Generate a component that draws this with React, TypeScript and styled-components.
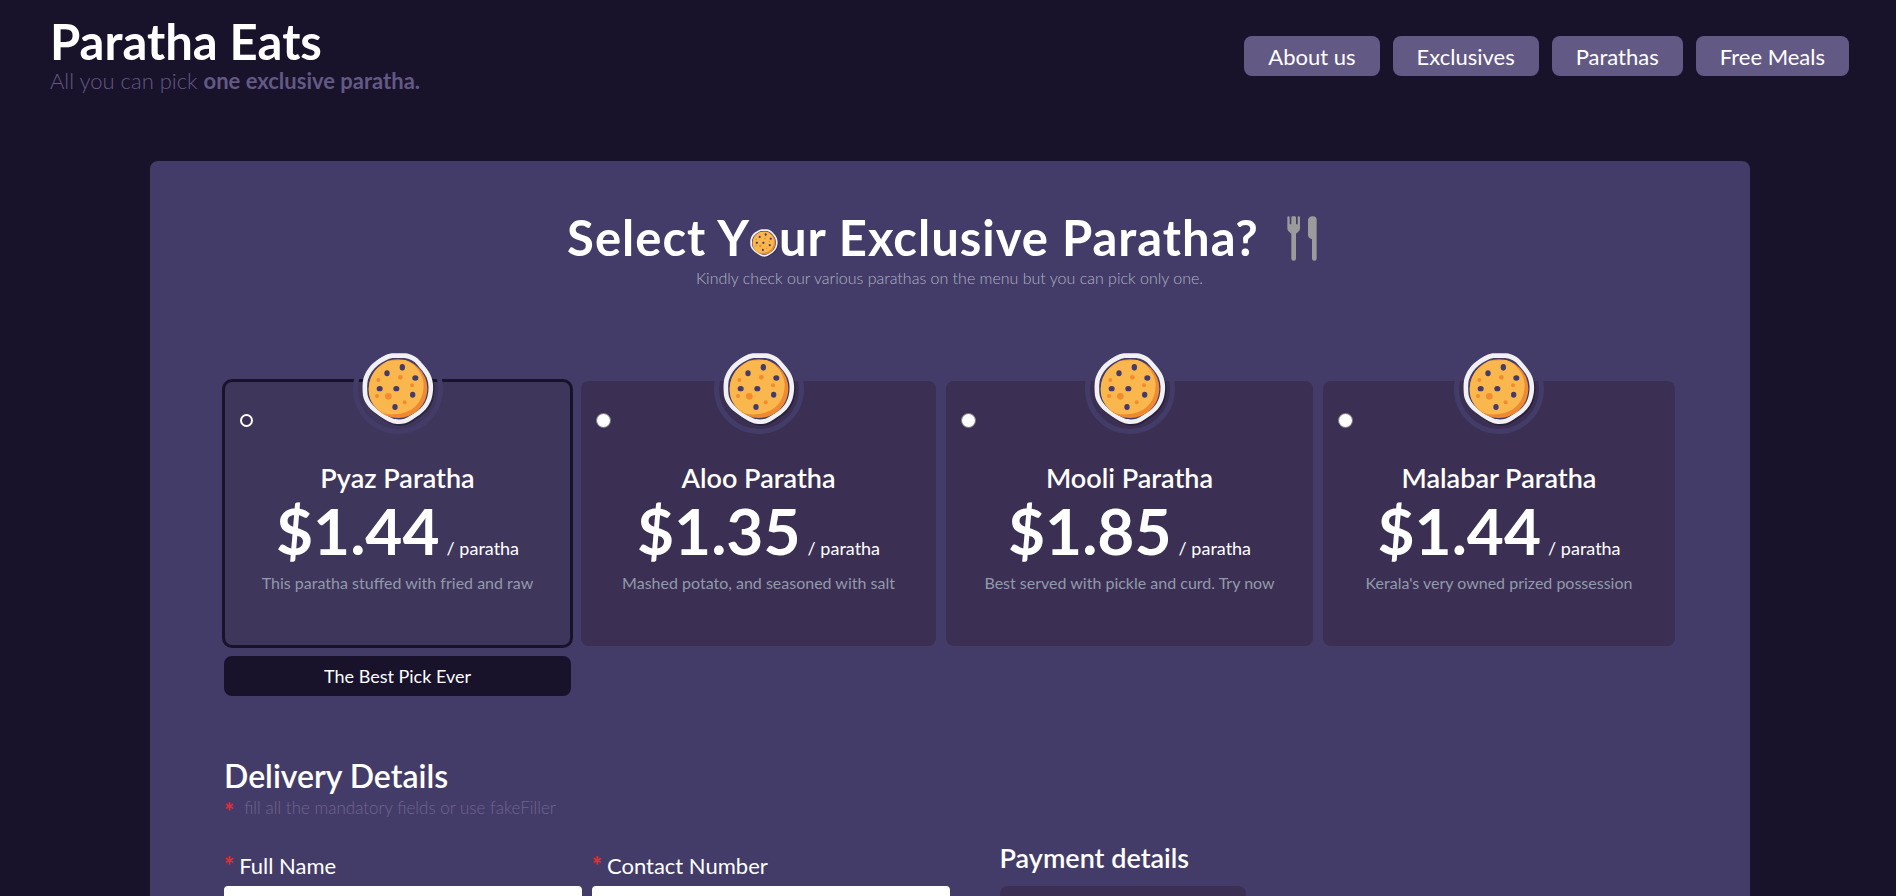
import React, { useState } from "react";
import styled, { createGlobalStyle, css } from "styled-components";

const color = {
  night: "#18122b",
  panel: "#443c68",
  card: "#3b3053",
  cardPicked: "#3f365c",
  lilac: "#635985",
  muted: "#929aab",
  mutedLight: "#adb4c3",
  hint: "#6f6492",
  required: "#e62e33",
};

const GlobalStyle = createGlobalStyle`
  *, *::before, *::after { box-sizing: border-box; }
  body {
    margin: 0;
    background: ${color.night};
    color: #fff;
    font-family: Lato, "Open Sans", sans-serif;
    font-size: 16px;
    line-height: 24px;
  }
  h1, h2, h3, p { margin: 0; }
  button, input { font: inherit; }
`;

const Page = styled.div`
  height: 100vh;
  overflow: hidden auto;
  scrollbar-width: none;
`;

const Header = styled.header`
  display: flex;
  justify-content: space-between;
  align-items: center;
  gap: 24px;
  padding: 16px 47px 0 50px;
`;

const Brand = styled.h1`
  font-size: 49px;
  line-height: 50px;
  font-weight: 700;
`;

const Tagline = styled.p`
  color: ${color.lilac};
  font-size: 22px;
  line-height: 30px;
  font-weight: 300;

  strong {
    font-weight: 700;
  }
`;

const Nav = styled.nav`
  display: flex;
  gap: 13px;
`;

const NavButton = styled.button`
  height: 40px;
  padding: 2px 24px 0;
  border: 0;
  border-radius: 8px;
  background: ${color.lilac};
  color: #fff;
  font-size: 22px;
  white-space: nowrap;
  cursor: pointer;
`;

const Main = styled.main`
  padding: 65px 146px 50px 150px;
`;

const Panel = styled.section`
  padding: 47px 75px 60px 74px;
  border-radius: 8px;
  background: ${color.panel};
`;

const Intro = styled.div`
  display: flex;
  flex-direction: column;
  align-items: center;
`;

const Title = styled.h2`
  display: flex;
  align-items: center;
  font-size: 49px;
  line-height: 58px;
  font-weight: 700;
  letter-spacing: 1px;
`;

const TitleCookie = styled.span`
  display: inline-flex;
  vertical-align: -1px;
  margin-right: 1px;
`;

const Cutlery = styled.svg`
  width: 30px;
  height: 45px;
  margin: 2px 15px 0 28px;
`;

const Note = styled.p`
  color: ${color.mutedLight};
  font-weight: 300;
`;

const Menu = styled.div`
  display: grid;
  grid-template-columns: 347fr 355fr 367fr 352fr;
  align-items: start;
  gap: 10px;
  margin-top: 91px;
`;

const Choice = styled.div`
  display: flex;
  flex-direction: column;
  gap: 10px;
  min-width: 0;
`;

const Card = styled.label<{ $picked: boolean }>`
  position: relative;
  display: flex;
  flex-direction: column;
  align-items: center;
  padding: 79px 16px 51px;
  border-radius: 8px;
  background: ${color.card};
  text-align: center;
  cursor: pointer;

  ${(p) =>
    p.$picked &&
    css`
      background: ${color.cardPicked};
      outline: 3px solid ${color.night};
      outline-offset: -1px;
    `}
`;

const CookieRing = styled.span`
  position: absolute;
  top: -37px;
  left: calc(50% - 45px);
  display: grid;
  place-items: center;
  width: 90px;
  height: 90px;
  border: 5px solid ${color.panel};
  border-radius: 50%;
`;

const CookieSvg = styled.svg<{ $size: number }>`
  display: block;
  width: ${(p) => p.$size}px;
  height: ${(p) => p.$size}px;
  overflow: visible;
`;

const Radio = styled.input`
  position: absolute;
  top: 32px;
  left: 15px;
  appearance: none;
  width: 15px;
  height: 15px;
  margin: 0;
  border: 1px solid #77757a;
  border-radius: 50%;
  background: #fff;
  cursor: pointer;

  &:checked {
    width: 13px;
    height: 13px;
    margin: 1px;
    border: 2px solid #fff;
    background: ${color.card};
  }
`;

const Name = styled.span`
  font-size: 27px;
  line-height: 36px;
  font-weight: 600;
`;

const Price = styled.span`
  display: flex;
  align-items: baseline;
  gap: 7px;
  height: 68px;
  font-size: 18px;

  strong {
    font-size: 64px;
    line-height: 70px;
    font-weight: 700;
  }
`;

const Description = styled.span`
  margin-top: 7px;
  color: ${color.muted};
`;

const BestPick = styled.div`
  height: 40px;
  border-radius: 8px;
  background: ${color.night};
  font-size: 18px;
  line-height: 40px;
  text-align: center;
`;

const Details = styled.section`
  margin-top: 60px;
`;

const DetailsTitle = styled.h3`
  font-size: 32px;
  line-height: 40px;
  font-weight: 600;
`;

const Star = styled.span`
  color: ${color.required};
  font-size: 24px;
  font-weight: 700;
`;

const Hint = styled.p`
  display: flex;
  gap: 10px;
  height: 24px;
  color: ${color.hint};
  font-size: 17px;
  font-weight: 300;

  ${Star} {
    line-height: 32px;
  }
`;

const Columns = styled.div`
  display: grid;
  grid-template-columns: 725fr 675fr;
  gap: 50px;
  margin-top: 20px;
`;

const Fields = styled.div`
  display: grid;
  grid-template-columns: 1fr 1fr;
  gap: 10px;
  padding-top: 12px;
`;

const Field = styled.div`
  display: flex;
  flex-direction: column;
  gap: 6px;
`;

const FieldLabel = styled.label`
  display: flex;
  gap: 5px;
  font-size: 22px;
  line-height: 28px;
`;

const TextBox = styled.input`
  width: 100%;
  height: 50px;
  padding: 0 12px;
  border: 0;
  border-radius: 4px;
  background: #fff;
  color: ${color.night};
`;

const Payment = styled.div`
  display: flex;
  flex-direction: column;
  gap: 10px;
`;

const PaymentTitle = styled.h3`
  font-size: 27px;
  line-height: 36px;
  font-weight: 600;
`;

const PaymentCard = styled.div`
  width: 246px;
  height: 120px;
  border-radius: 8px;
  background: ${color.card};
`;

const OUTLINE =
  "M155 39L195 39C215 41 230 50 241 63C250 74 266 90 273 107C281 127 281 150 276 170C270 194 256 211 239 223C226 232 210 243 196 249C184 252 166 252 156 248C140 242 122 230 106 218C88 204 73 187 69 166C67 147 67 128 70 115C76 94 89 76 105 64C121 53 138 41 155 39Z";

const chips = [
  [187, 81, 8, 10],
  [141, 99, 8, 9],
  [226, 113, 9, 8],
  [119, 145, 9, 8],
  [169, 145, 9, 8],
  [218, 163, 8, 9],
  [165, 200, 8, 9],
];

const crumbs = [
  [181, 111, 7],
  [115, 119, 6],
  [216, 135, 6],
  [111, 167, 6],
  [145, 168, 10],
  [194, 186, 6],
];

function Cookie({ size }: { size: number }) {
  return (
    <CookieSvg $size={size} viewBox="66 38 216 216" aria-hidden="true">
      <path d={OUTLINE} fill="#18122b" opacity="0.5" transform="translate(4 5)" />
      <path d={OUTLINE} fill="#f1f0f2" />
      <path d={OUTLINE} fill="#443c68" transform="translate(174 145) scale(0.87) translate(-174 -145)" />
      <circle cx="174" cy="145" r="88" fill="#ef8a30" />
      <path d="M145 61L196 59C222 68 248 96 251 130C252 176 228 216 170 221C152 224 140 221 128 217C106 203 90 184 87 160C84 132 92 106 108 88C120 76 132 68 145 61Z" fill="#f9b74e" />
      {chips.map(([x, y, rx, ry]) => (
        <ellipse key={`${x}-${y}`} cx={x} cy={y} rx={rx} ry={ry} fill="#443a6b" />
      ))}
      {crumbs.map(([x, y, r]) => (
        <circle key={`${x}-${y}`} cx={x} cy={y} r={r} fill="#f28b30" />
      ))}
    </CookieSvg>
  );
}

function ForkAndKnife() {
  return (
    <Cutlery viewBox="48 47 90 135" fill="#9b9b9b" aria-hidden="true">
      <path d="M49 51Q49 48 52 48Q56 48 56 51V72H61V51Q61 48 64 48H71Q75 48 75 51V72H80V51Q80 48 83 48Q87 48 87 51V84Q87 93 75 100V175Q75 181 68 181Q61 181 61 175V100Q49 93 49 84Z" />
      <path d="M111 61C111 52 118 48 126 48C133 48 137 52 137 58V175Q137 181 130 181Q123 181 123 175V117C115 115 111 109 111 104Z" />
    </Cutlery>
  );
}

const navItems = ["About us", "Exclusives", "Parathas", "Free Meals"];

const parathas = [
  { id: "pyaz", name: "Pyaz Paratha", price: "$1.44", text: "This paratha stuffed with fried and raw", best: true },
  { id: "aloo", name: "Aloo Paratha", price: "$1.35", text: "Mashed potato, and seasoned with salt" },
  { id: "mooli", name: "Mooli Paratha", price: "$1.85", text: "Best served with pickle and curd. Try now" },
  { id: "malabar", name: "Malabar Paratha", price: "$1.44", text: "Kerala's very owned prized possession" },
];

const fields = [
  { id: "full-name", label: "Full Name", type: "text" },
  { id: "contact-number", label: "Contact Number", type: "tel" },
];

export default function App() {
  const [picked, setPicked] = useState("pyaz");

  return (
    <Page>
      <GlobalStyle />
      <Header>
        <div>
          <Brand>Paratha Eats</Brand>
          <Tagline>
            All you can pick <strong>one exclusive paratha.</strong>
          </Tagline>
        </div>
        <Nav>
          {navItems.map((item) => (
            <NavButton key={item} type="button">
              {item}
            </NavButton>
          ))}
        </Nav>
      </Header>
      <Main>
        <Panel>
          <Intro>
            <Title>
              <span>
                Select Y
                <TitleCookie>
                  <Cookie size={28} />
                </TitleCookie>
                ur Exclusive Paratha?
              </span>
              <ForkAndKnife />
            </Title>
            <Note>Kindly check our various parathas on the menu but you can pick only one.</Note>
          </Intro>

          <Menu>
            {parathas.map((p) => (
              <Choice key={p.id}>
                <Card $picked={picked === p.id}>
                  <Radio
                    type="radio"
                    name="paratha"
                    value={p.id}
                    checked={picked === p.id}
                    onChange={() => setPicked(p.id)}
                  />
                  <CookieRing>
                    <Cookie size={72} />
                  </CookieRing>
                  <Name>{p.name}</Name>
                  <Price>
                    <strong>{p.price}</strong>/ paratha
                  </Price>
                  <Description>{p.text}</Description>
                </Card>
                {p.best && <BestPick>The Best Pick Ever</BestPick>}
              </Choice>
            ))}
          </Menu>

          <Details>
            <DetailsTitle>Delivery Details</DetailsTitle>
            <Hint>
              <Star>*</Star>fill all the mandatory fields or use fakeFiller
            </Hint>
            <Columns>
              <Fields>
                {fields.map((f) => (
                  <Field key={f.id}>
                    <FieldLabel htmlFor={f.id}>
                      <Star>*</Star>
                      {f.label}
                    </FieldLabel>
                    <TextBox id={f.id} type={f.type} required />
                  </Field>
                ))}
              </Fields>
              <Payment>
                <PaymentTitle>Payment details</PaymentTitle>
                <PaymentCard />
              </Payment>
            </Columns>
          </Details>
        </Panel>
      </Main>
    </Page>
  );
}
